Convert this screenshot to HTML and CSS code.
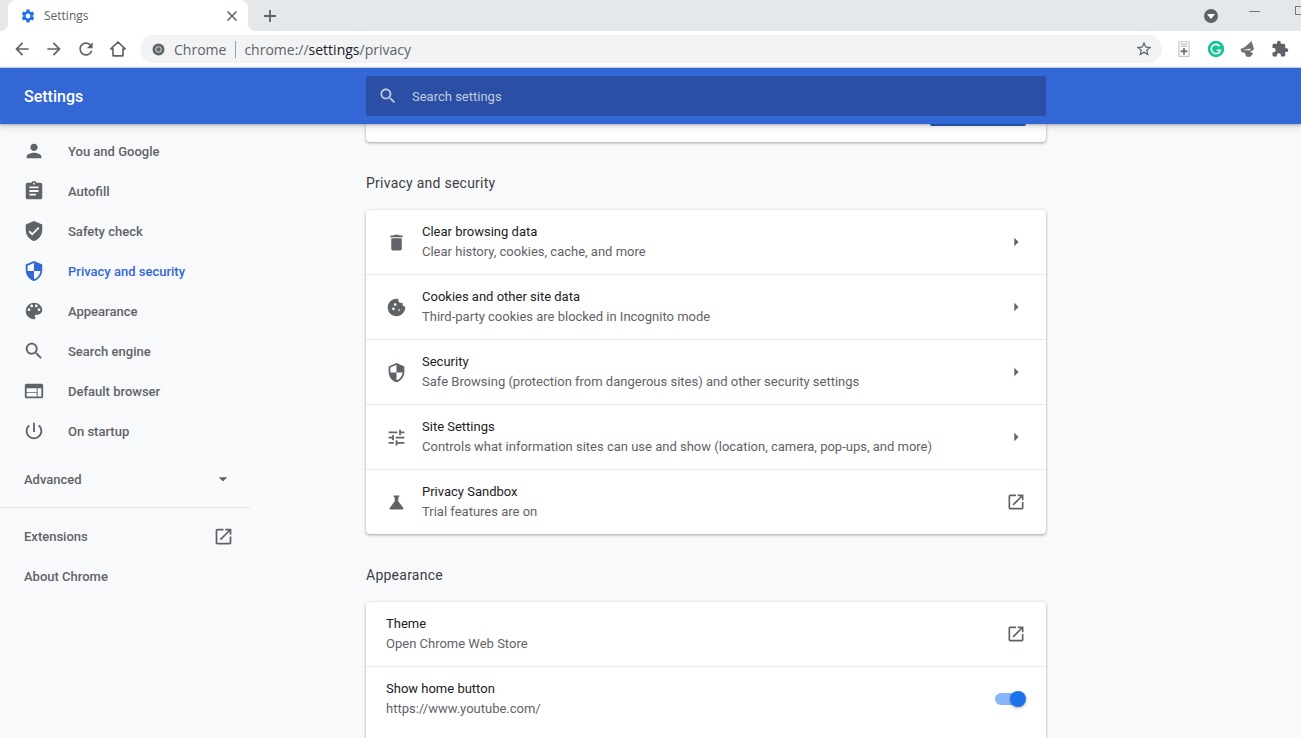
FILE: index.html
```html
<!DOCTYPE html>
<html lang="en">
<head>
  <meta charset="UTF-8" />
  <title>Settings</title>
  <link rel="stylesheet" href="styles.css">
</head>
<body>
  <svg class="sprite" width="0" height="0">
    <symbol id="i-gear" viewBox="0 0 24 24"><path d="M19.14 12.94c.04-.3.06-.61.06-.94 0-.32-.02-.64-.07-.94l2.03-1.58c.18-.14.23-.41.12-.61l-1.92-3.32c-.12-.22-.37-.29-.59-.22l-2.39.96c-.5-.38-1.03-.7-1.62-.94l-.36-2.54c-.04-.24-.24-.41-.48-.41h-3.84c-.24 0-.43.17-.47.41l-.36 2.54c-.59.24-1.13.57-1.62.94l-2.39-.96c-.22-.08-.47 0-.59.22L2.74 8.87c-.12.21-.08.47.12.61l2.03 1.58c-.05.3-.09.63-.09.94s.02.64.07.94l-2.03 1.58c-.18.14-.23.41-.12.61l1.92 3.32c.12.22.37.29.59.22l2.39-.96c.5.38 1.03.7 1.62.94l.36 2.54c.05.24.24.41.48.41h3.84c.24 0 .44-.17.47-.41l.36-2.54c.59-.24 1.13-.56 1.62-.94l2.39.96c.22.08.47 0 .59-.22l1.92-3.32c.12-.22.07-.47-.12-.61l-2.01-1.58zM12 15.6c-1.98 0-3.6-1.62-3.6-3.6s1.62-3.6 3.6-3.6 3.6 1.62 3.6 3.6-1.62 3.6-3.6 3.6z"/></symbol>
    <symbol id="i-back" viewBox="0 0 24 24"><path d="M20 11H7.83l5.59-5.59L12 4l-8 8 8 8 1.41-1.41L7.83 13H20v-2z"/></symbol>
    <symbol id="i-forward" viewBox="0 0 24 24"><path d="M12 4l-1.41 1.41L16.17 11H4v2h12.17l-5.58 5.59L12 20l8-8z"/></symbol>
    <symbol id="i-refresh" viewBox="0 0 24 24"><path d="M17.65 6.35C16.2 4.9 14.21 4 12 4c-4.42 0-7.99 3.58-7.99 8s3.57 8 7.99 8c3.73 0 6.84-2.55 7.73-6h-2.08c-.82 2.33-3.04 4-5.65 4-3.31 0-6-2.69-6-6s2.69-6 6-6c1.66 0 3.14.69 4.22 1.78L13 11h7V4l-2.35 2.35z"/></symbol>
    <symbol id="i-star" viewBox="0 0 24 24"><path d="M22 9.24l-7.19-.62L12 2 9.19 8.63 2 9.24l5.46 4.73L5.82 21 12 17.27 18.18 21l-1.63-7.03L22 9.24zM12 15.4l-3.76 2.27 1-4.28-3.32-2.88 4.38-.38L12 6.1l1.71 4.04 4.38.38-3.32 2.88 1 4.28L12 15.4z"/></symbol>
    <symbol id="i-puzzle" viewBox="0 0 24 24"><path d="M20.5 11H19V7c0-1.1-.9-2-2-2h-4V3.5C13 2.12 11.88 1 10.5 1S8 2.12 8 3.5V5H4c-1.1 0-1.99.9-1.99 2v3.8H3.5c1.49 0 2.7 1.21 2.7 2.7s-1.21 2.7-2.7 2.7H2V20c0 1.1.9 2 2 2h3.8v-1.5c0-1.49 1.21-2.7 2.7-2.7 1.49 0 2.7 1.21 2.7 2.7V22H17c1.1 0 2-.9 2-2v-4h1.5c1.38 0 2.5-1.12 2.5-2.5S21.88 11 20.5 11z"/></symbol>
    <symbol id="i-person" viewBox="0 0 24 24"><path d="M12 12c2.21 0 4-1.79 4-4s-1.79-4-4-4-4 1.79-4 4 1.79 4 4 4zm0 2c-2.67 0-8 1.34-8 4v2h16v-2c0-2.66-5.33-4-8-4z"/></symbol>
    <symbol id="i-assignment" viewBox="0 0 24 24"><path d="M19 3h-4.18C14.4 1.84 13.3 1 12 1c-1.3 0-2.4.84-2.82 2H5c-1.1 0-2 .9-2 2v14c0 1.1.9 2 2 2h14c1.1 0 2-.9 2-2V5c0-1.1-.9-2-2-2zm-7 0c.55 0 1 .45 1 1s-.45 1-1 1-1-.45-1-1 .45-1 1-1zm2 14H7v-2h7v2zm3-4H7v-2h10v2zm0-4H7V7h10v2z"/></symbol>
    <symbol id="i-verified" viewBox="0 0 24 24"><path d="M12 1L3 5v6c0 5.55 3.84 10.74 9 12 5.16-1.26 9-6.45 9-12V5l-9-4zm-2 16l-4-4 1.41-1.41L10 14.17l6.59-6.59L18 9l-8 8z"/></symbol>
    <symbol id="i-security" viewBox="0 0 24 24"><path d="M12 1L3 5v6c0 5.55 3.84 10.74 9 12 5.16-1.26 9-6.45 9-12V5l-9-4zm0 10.99h7c-.53 4.12-3.28 7.79-7 8.94V12H5V6.3l7-3.11v8.8z"/></symbol>
    <symbol id="i-palette" viewBox="0 0 24 24"><path d="M12 3c-4.97 0-9 4.03-9 9s4.03 9 9 9c.83 0 1.5-.67 1.5-1.5 0-.39-.15-.74-.39-1.01-.23-.26-.38-.61-.38-.99 0-.83.67-1.5 1.5-1.5H16c2.76 0 5-2.24 5-5 0-4.42-4.03-8-9-8zm-5.5 9c-.83 0-1.5-.67-1.5-1.5S5.67 9 6.5 9 8 9.67 8 10.5 7.33 12 6.5 12zm3-4C8.67 8 8 7.33 8 6.5S8.67 5 9.5 5s1.5.67 1.5 1.5S10.33 8 9.5 8zm5 0c-.83 0-1.5-.67-1.5-1.5S13.67 5 14.5 5s1.5.67 1.5 1.5S15.33 8 14.5 8zm3 4c-.83 0-1.5-.67-1.5-1.5S16.67 9 17.5 9s1.5.67 1.5 1.5-.67 1.5-1.5 1.5z"/></symbol>
    <symbol id="i-search" viewBox="0 0 24 24"><path d="M15.5 14h-.79l-.28-.27C15.41 12.59 16 11.11 16 9.5 16 5.91 13.09 3 9.5 3S3 5.91 3 9.5 5.91 16 9.5 16c1.61 0 3.09-.59 4.23-1.57l.27.28v.79l5 4.99L20.49 19l-4.99-5zm-6 0C7.01 14 5 11.99 5 9.5S7.01 5 9.5 5 14 7.01 14 9.5 11.99 14 9.5 14z"/></symbol>
    <symbol id="i-web" viewBox="0 0 24 24"><path d="M20 4H4c-1.1 0-1.99.9-1.99 2L2 18c0 1.1.9 2 2 2h16c1.1 0 2-.9 2-2V6c0-1.1-.9-2-2-2zm-5 14H4v-4h11v4zm0-5H4V9h11v4zm5 5h-4V9h4v9z"/></symbol>
    <symbol id="i-power" viewBox="0 0 24 24"><path d="M13 3h-2v10h2V3zm4.83 2.17l-1.42 1.42C17.99 7.86 19 9.81 19 12c0 3.87-3.13 7-7 7s-7-3.13-7-7c0-2.19 1.01-4.14 2.58-5.42L6.17 5.17C4.23 6.82 3 9.26 3 12c0 4.97 4.03 9 9 9s9-4.03 9-9c0-2.74-1.23-5.18-3.17-6.83z"/></symbol>
    <symbol id="i-open" viewBox="0 0 24 24"><path d="M19 19H5V5h7V3H5c-1.11 0-2 .9-2 2v14c0 1.1.89 2 2 2h14c1.1 0 2-.9 2-2v-7h-2v7zM14 3v2h3.59l-9.83 9.83 1.41 1.41L19 6.41V10h2V3h-7z"/></symbol>
    <symbol id="i-delete" viewBox="0 0 24 24"><path d="M6 19c0 1.1.9 2 2 2h8c1.1 0 2-.9 2-2V7H6v12zM19 4h-3.5l-1-1h-5l-1 1H5v2h14V4z"/></symbol>
    <symbol id="i-cookie" viewBox="0 0 24 24"><path d="M21.95 10.99c-1.79-.03-3.7-1.95-2.68-4.22-2.97 1-5.78-1.59-5.19-4.56C7.1.74 2 6.41 2 12c0 5.52 4.48 10 10 10 5.89 0 10.54-5.08 9.95-11.01zM8.5 15c-.83 0-1.5-.67-1.5-1.5S7.67 12 8.5 12s1.5.67 1.5 1.5S9.33 15 8.5 15zm2-5C9.67 10 9 9.33 9 8.5S9.67 7 10.5 7s1.5.67 1.5 1.5-.67 1.5-1.5 1.5zm4.5 6c-.55 0-1-.45-1-1s.45-1 1-1 1 .45 1 1-.45 1-1 1z"/></symbol>
    <symbol id="i-tune" viewBox="0 0 24 24"><path d="M3 17v2h6v-2H3zM3 5v2h10V5H3zm10 16v-2h8v-2h-8v-2h-2v6h2zM7 9v2H3v2h4v2h2V9H7zm14 4v-2H11v2h10zm-6-4h2V7h4V5h-4V3h-2v6z"/></symbol>
    <symbol id="i-flask" viewBox="0 0 24 24"><path d="M19.8 18.4L14 10.67V6.5l1.35-1.69c.26-.33.03-.81-.39-.81H9.04c-.42 0-.65.48-.39.81L10 6.5v4.17L4.2 18.4c-.49.66-.02 1.6.8 1.6h14c.82 0 1.29-.94.8-1.6z"/></symbol>
    <symbol id="i-arrow" viewBox="0 0 24 24"><path d="M10 7l5 5-5 5z"/></symbol>
    <symbol id="i-drop" viewBox="0 0 24 24"><path d="M7 10l5 5 5-5z"/></symbol>
  </svg>

  <div class="tabstrip">
    <div class="tab">
      <svg class="tab-icon"><use href="#i-gear"/></svg>
      <span class="tab-title">Settings</span>
      <svg class="tab-close" viewBox="0 0 12 12"><path d="M1.5 1.5l9 9M10.5 1.5l-9 9"/></svg>
    </div>
    <svg class="new-tab" viewBox="0 0 14 14"><path d="M7 1v12M1 7h12"/></svg>
    <div class="window-controls">
      <span class="profile-dot"><span class="profile-arrow"></span></span>
      <span class="win-min"></span>
      <span class="win-restore"></span>
    </div>
  </div>

  <div class="toolbar">
    <svg class="tool"><use href="#i-back"/></svg>
    <svg class="tool"><use href="#i-forward"/></svg>
    <svg class="tool"><use href="#i-refresh"/></svg>
    <svg class="tool home" viewBox="0 0 24 24"><path d="M12 3.6L3.4 11.8H6v8.4h12v-8.4h2.6z"/></svg>
    <div class="omnibox">
      <svg class="chrome-logo" viewBox="0 0 24 24">
        <circle cx="12" cy="12" r="11" fill="#5f6368"/>
        <circle cx="12" cy="12" r="6" fill="#c4c7ca"/>
        <circle cx="12" cy="12" r="4" fill="#5f6368"/>
      </svg>
      <span class="omni-chip">Chrome</span>
      <span class="omni-sep"></span>
      <span class="omni-url">chrome://<b>settings</b>/privacy</span>
      <svg class="omni-star"><use href="#i-star"/></svg>
    </div>
    <div class="extensions">
      <svg class="ext" viewBox="0 0 16 16"><path class="doc" d="M3.5 1.5h9v13h-9z"/><path class="doc-lines" d="M5 3.5h6M5 5.5h6"/><path class="doc-plus" d="M8 7v6M5 10h6"/></svg>
      <svg class="ext" viewBox="0 0 18 18"><circle cx="9" cy="9" r="8.2" fill="#15c39a"/><path d="M12.6 6.2A4.6 4.6 0 1 0 13.4 10.2H9.8" fill="none" stroke="#fff" stroke-width="1.6"/></svg>
      <svg class="ext" viewBox="0 0 18 18"><path d="M12.5 1L6 7 1.5 9l1 3 3.5 1 1 3.5 4 .5 2-2 1-2-3-1 4-2.5z" fill="#6d6f72"/><path d="M3 10l9-1.5-1 2z" fill="#e8e8e8"/></svg>
      <svg class="ext puzzle"><use href="#i-puzzle"/></svg>
    </div>
  </div>

  <header class="settings-header">
    <div class="header-title">Settings</div>
    <div class="search-box">
      <svg class="search-icon"><use href="#i-search"/></svg>
      <span>Search settings</span>
    </div>
  </header>

  <div class="page">
    <nav class="sidebar">
      <a class="nav-item"><svg class="nav-icon"><use href="#i-person"/></svg>You and Google</a>
      <a class="nav-item"><svg class="nav-icon"><use href="#i-assignment"/></svg>Autofill</a>
      <a class="nav-item"><svg class="nav-icon"><use href="#i-verified"/></svg>Safety check</a>
      <a class="nav-item active"><svg class="nav-icon"><use href="#i-security"/></svg>Privacy and security</a>
      <a class="nav-item"><svg class="nav-icon"><use href="#i-palette"/></svg>Appearance</a>
      <a class="nav-item"><svg class="nav-icon"><use href="#i-search"/></svg>Search engine</a>
      <a class="nav-item"><svg class="nav-icon"><use href="#i-web"/></svg>Default browser</a>
      <a class="nav-item"><svg class="nav-icon"><use href="#i-power"/></svg>On startup</a>
      <a class="nav-plain advanced">Advanced<svg class="nav-end drop"><use href="#i-drop"/></svg></a>
      <div class="nav-line"></div>
      <a class="nav-plain">Extensions<svg class="nav-end"><use href="#i-open"/></svg></a>
      <a class="nav-plain">About Chrome</a>
    </nav>

    <main class="main">
      <div class="card card-cut">
        <div class="peek-button"></div>
      </div>

      <h2 class="section-title">Privacy and security</h2>
      <div class="card">
        <div class="row">
          <svg class="row-icon"><use href="#i-delete"/></svg>
          <div class="row-text"><div class="row-label">Clear browsing data</div><div class="row-sub">Clear history, cookies, cache, and more</div></div>
          <svg class="row-end"><use href="#i-arrow"/></svg>
        </div>
        <div class="row">
          <svg class="row-icon"><use href="#i-cookie"/></svg>
          <div class="row-text"><div class="row-label">Cookies and other site data</div><div class="row-sub">Third-party cookies are blocked in Incognito mode</div></div>
          <svg class="row-end"><use href="#i-arrow"/></svg>
        </div>
        <div class="row">
          <svg class="row-icon"><use href="#i-security"/></svg>
          <div class="row-text"><div class="row-label">Security</div><div class="row-sub">Safe Browsing (protection from dangerous sites) and other security settings</div></div>
          <svg class="row-end"><use href="#i-arrow"/></svg>
        </div>
        <div class="row">
          <svg class="row-icon"><use href="#i-tune"/></svg>
          <div class="row-text"><div class="row-label">Site Settings</div><div class="row-sub">Controls what information sites can use and show (location, camera, pop-ups, and more)</div></div>
          <svg class="row-end"><use href="#i-arrow"/></svg>
        </div>
        <div class="row">
          <svg class="row-icon"><use href="#i-flask"/></svg>
          <div class="row-text"><div class="row-label">Privacy Sandbox</div><div class="row-sub">Trial features are on</div></div>
          <svg class="row-end"><use href="#i-open"/></svg>
        </div>
      </div>

      <h2 class="section-title">Appearance</h2>
      <div class="card card-tail">
        <div class="row">
          <div class="row-text"><div class="row-label">Theme</div><div class="row-sub">Open Chrome Web Store</div></div>
          <svg class="row-end"><use href="#i-open"/></svg>
        </div>
        <div class="row">
          <div class="row-text"><div class="row-label">Show home button</div><div class="row-sub">https://www.youtube.com/</div></div>
          <div class="toggle"><span class="toggle-knob"></span></div>
        </div>
      </div>
    </main>
  </div>
</body>
</html>
```

FILE: styles.css
```css
:root {
  --grey: #5f6368;
  --blue: #3367d6;
  --page-bg: #f8f9fb;
  --strip: #e5e8eb;
}

html, body {
  height: 738px;
  overflow: hidden;
}

body {
  margin: 0;
  font-family: Roboto, 'Liberation Sans', sans-serif;
  font-size: 13px;
  background-color: var(--page-bg);
  color: var(--grey);
}

.sprite {
  display: block;
  height: 0;
}

svg {
  fill: var(--grey);
  flex: none;
}

/* browser tabs */
.tabstrip {
  height: 31px;
  display: flex;
  align-items: center;
  padding-left: 8px;
  background-color: var(--strip);
}

.tab {
  position: relative;
  width: 240px;
  height: 31px;
  box-sizing: border-box;
  padding: 0 10px 0 12px;
  display: flex;
  align-items: center;
  background-color: #fff;
  border-radius: 8px 8px 0 0;
}

.tab::before,
.tab::after {
  content: "";
  position: absolute;
  bottom: 0;
  width: 8px;
  height: 8px;
}

.tab::before {
  left: -8px;
  background: radial-gradient(circle at 0 0, transparent 8px, #fff 8.5px);
}

.tab::after {
  right: -8px;
  background: radial-gradient(circle at 100% 0, transparent 8px, #fff 8.5px);
}

.tab-icon {
  width: 16px;
  height: 16px;
  fill: #1a73e8;
}

.tab-title {
  margin-left: 8px;
  flex: 1;
  font-family: 'Open Sans', sans-serif;
  font-size: 12px;
  color: #5f6368;
}

.tab-close {
  width: 12px;
  height: 12px;
  fill: none;
  stroke: var(--grey);
  stroke-width: 1.5;
}

.new-tab {
  width: 14px;
  height: 14px;
  margin-left: 15px;
  fill: none;
  stroke: var(--grey);
  stroke-width: 1.8;
}

.window-controls {
  margin-left: auto;
  display: flex;
  align-items: center;
  height: 100%;
}

.profile-dot {
  width: 14px;
  height: 14px;
  border-radius: 50%;
  background-color: #5f6368;
  display: flex;
  align-items: center;
  justify-content: center;
}

.profile-arrow {
  width: 0;
  height: 0;
  margin-top: 2px;
  border-left: 4px solid transparent;
  border-right: 4px solid transparent;
  border-top: 5px solid #fff;
}

.win-min {
  width: 11px;
  height: 1px;
  margin: -9px 0 0 31px;
  background-color: #75787c;
}

.win-restore {
  width: 7px;
  height: 7px;
  margin: -10px -3px 0 35px;
  border: 1px solid #75787c;
}

/* toolbar */
.toolbar {
  height: 36px;
  display: flex;
  align-items: center;
  padding-left: 12px;
  background-color: #fff;
  border-bottom: 1px solid #cfd9ec;
}

.tool {
  width: 20px;
  height: 20px;
  margin-right: 12px;
}

.home {
  fill: none;
  stroke: var(--grey);
  stroke-width: 2;
  stroke-linejoin: round;
  margin-right: 0;
}

.omnibox {
  width: 1022px;
  height: 28px;
  margin-left: 12px;
  box-sizing: border-box;
  padding: 0 9px 0 12px;
  display: flex;
  align-items: center;
  border-radius: 14px;
  background-color: #f1f3f4;
  font-family: 'Open Sans', sans-serif;
  font-size: 14px;
  color: #5f6368;
}

.chrome-logo {
  width: 13px;
  height: 13px;
}

.omni-chip {
  margin-left: 9px;
}

.omni-sep {
  width: 1px;
  height: 17px;
  margin: 0 8px 0 9px;
  background-color: #9aa0a6;
}

.omni-url {
  flex: 1;
}

.omni-url b {
  font-weight: 400;
  color: #202124;
}

.omni-star {
  width: 18px;
  height: 18px;
}

.extensions {
  display: flex;
  align-items: center;
  margin-left: 13px;
  gap: 14px;
}

.ext {
  width: 18px;
  height: 18px;
}

.doc {
  fill: #fff;
  stroke: #c3c5c8;
}

.doc-lines {
  fill: none;
  stroke: #a9acaf;
}

.doc-plus {
  fill: none;
  stroke: #6f7276;
  stroke-width: 1.6;
}

/* settings header */
.settings-header {
  position: relative;
  z-index: 2;
  height: 56px;
  display: flex;
  align-items: center;
  background-color: var(--blue);
  box-shadow: 0 1px 2px rgba(60,64,67,.3), 0 2px 6px 2px rgba(60,64,67,.15);
}

.header-title {
  width: 342px;
  padding-left: 24px;
  box-sizing: content-box;
  font-size: 16px;
  font-weight: 500;
  color: #fff;
}

.search-box {
  width: 680px;
  height: 40px;
  box-sizing: border-box;
  padding-left: 12px;
  display: flex;
  align-items: center;
  gap: 14px;
  border-radius: 2px;
  background-color: #2a4fa5;
  color: rgba(255,255,255,.72);
}

.search-icon {
  width: 20px;
  height: 20px;
  fill: rgba(255,255,255,.72);
}

/* page */
.page {
  display: flex;
}

.sidebar {
  width: 250px;
  padding-top: 7px;
  font-weight: 500;
}

.nav-item {
  height: 40px;
  display: flex;
  align-items: center;
  padding-left: 23px;
  color: var(--grey);
}

.nav-item.active {
  color: var(--blue);
}

.nav-item.active .nav-icon {
  fill: var(--blue);
}

.nav-icon {
  width: 22px;
  height: 22px;
  margin-right: 23px;
}

.nav-plain {
  height: 40px;
  display: flex;
  align-items: center;
  justify-content: space-between;
  padding: 0 16px 0 24px;
}

.advanced {
  margin-top: 8px;
}

.nav-line {
  height: 1px;
  margin: 8px 0;
  background-color: #e3e5e8;
}

.nav-end {
  width: 21px;
  height: 21px;
}

.drop {
  width: 20px;
  height: 20px;
  margin-right: 1px;
}

.main {
  width: 680px;
  margin-left: 116px;
}

.card {
  background-color: #fff;
  border-radius: 4px;
  box-shadow: 0 1px 2px rgba(60,64,67,.3), 0 1px 3px 1px rgba(60,64,67,.15);
}

.card-cut {
  height: 18px;
  border-radius: 0 0 4px 4px;
  display: flex;
  justify-content: flex-end;
  padding-right: 20px;
}

.peek-button {
  width: 96px;
  height: 2px;
  background-color: #1a5ab8;
  border-radius: 0 0 4px 4px;
}

.card-tail {
  padding-bottom: 40px;
}

.section-title {
  margin: 0;
  padding: 31px 0 17px;
  font-size: 14px;
  font-weight: 400;
  line-height: 20px;
  letter-spacing: .25px;
  color: #3c4043;
}

.row {
  height: 65px;
  box-sizing: border-box;
  padding: 0 20px;
  display: flex;
  align-items: center;
  border-bottom: 1px solid #e8eaed;
}

.row:last-child {
  height: 64px;
  border-bottom: none;
}

.row-icon {
  width: 21px;
  height: 21px;
  margin-right: 15px;
}

.row-text {
  flex: 1;
  line-height: 20px;
}

.row-label {
  color: #202124;
}

.row-sub {
  color: #5f6368;
}

.row-end {
  width: 20px;
  height: 20px;
}

.toggle {
  position: relative;
  width: 27px;
  height: 12px;
  margin-right: 4px;
  border-radius: 6px;
  background-color: #8ab4f8;
}

.toggle-knob {
  position: absolute;
  top: -2px;
  right: -4px;
  width: 16px;
  height: 16px;
  border-radius: 50%;
  background-color: #1a73e8;
  box-shadow: 0 1px 3px rgba(0,0,0,.35);
}
```
